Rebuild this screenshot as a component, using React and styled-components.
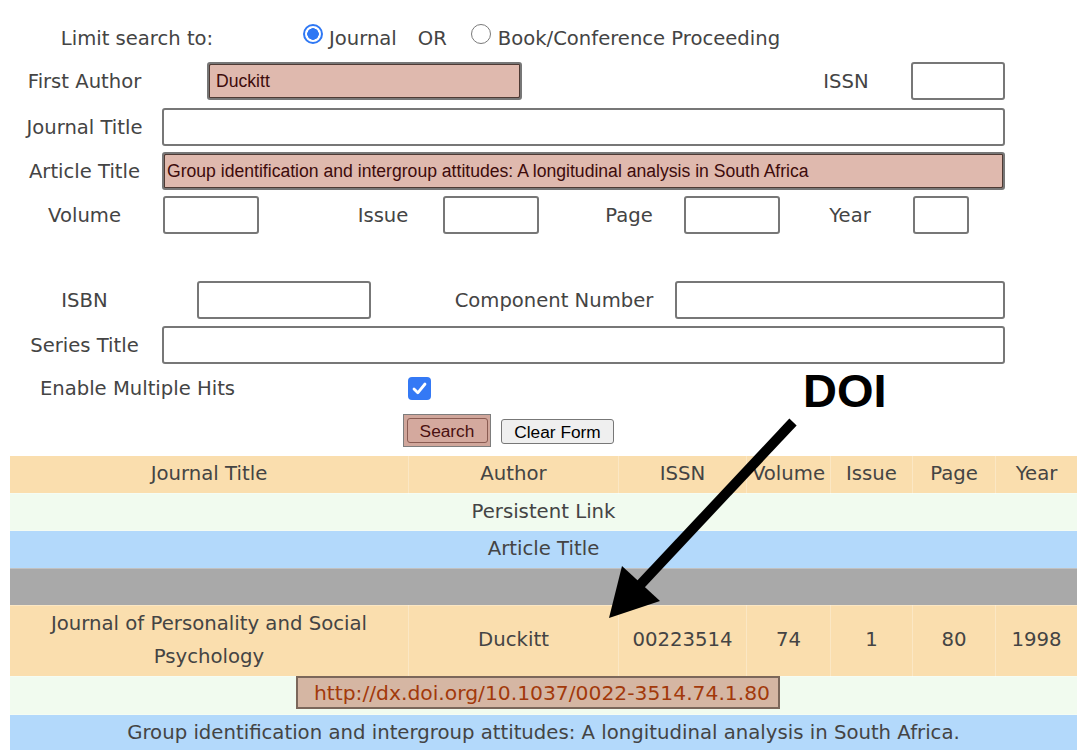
import React from "react";
import styled, { createGlobalStyle } from "styled-components";

const GlobalStyle = createGlobalStyle`
  body {
    margin: 0;
    background: #fff;
    font-family: "DejaVu Sans", Verdana, sans-serif;
    color: #444;
  }
`;

const Page = styled.div`
  position: relative;
  width: 1077px;
  height: 750px;
  overflow: hidden;
  padding-top: 18px;
  box-sizing: border-box;
`;

const Row = styled.div`
  display: flex;
  align-items: center;
  height: ${(p) => p.$h}px;
  padding-left: 9px;
`;

const Label = styled.div`
  flex-shrink: 0;
  width: ${(p) => p.$w || 151}px;
  margin-left: ${(p) => p.$ml || 0}px;
  text-align: center;
  white-space: nowrap;
  font-size: 19.6px;
  color: #444;
`;

const Field = styled.input`
  flex-shrink: 0;
  box-sizing: border-box;
  width: ${(p) => p.$w}px;
  height: 38px;
  margin: 0 0 0 ${(p) => p.$ml || 0}px;
  padding: 0 0 0 ${(p) => p.$pad || 4}px;
  border: 2px solid #777;
  border-radius: 3px;
  background: ${(p) => (p.$filled ? "#dfb9ae" : "#fff")};
  box-shadow: ${(p) => (p.$filled ? "inset 1px 1px 0 #4e3a34, inset -1px -1px 0 #4e3a34" : "none")};
  font-family: "Liberation Sans", Arial, sans-serif;
  font-size: 17.6px;
  color: #3d0b0b;
  outline: none;
`;

const Options = styled.div`
  display: flex;
  align-items: center;
  margin-left: ${(p) => p.$ml}px;
  font-size: 19.6px;
  color: #444;
`;

const Radio = styled.span`
  display: inline-block;
  box-sizing: border-box;
  width: 20px;
  height: 20px;
  margin-left: ${(p) => p.$ml || 0}px;
  margin-top: -8px;
  border-radius: 50%;
  border: ${(p) => (p.$on ? "2px solid #2f78f4" : "1.5px solid #7a7a7a")};
  background: ${(p) =>
    p.$on ? "radial-gradient(circle, #2f78f4 0 5.5px, #fff 6px)" : "#fff"};
`;

const OptionText = styled.span`
  margin-left: ${(p) => p.$ml}px;
`;

const Check = styled.span`
  display: inline-flex;
  align-items: center;
  justify-content: center;
  width: 23px;
  height: 23px;
  margin-left: ${(p) => p.$ml}px;
  border-radius: 4px;
  background: #3479f5;
`;

const SearchFrame = styled.div`
  display: flex;
  align-items: center;
  justify-content: center;
  box-sizing: border-box;
  width: 88px;
  height: 33px;
  margin-left: 394px;
  margin-top: -2px;
  background: #d0a69b;
  border: 1px solid #7d7d7d;
`;

const Button = styled.button`
  box-sizing: border-box;
  height: 25px;
  width: ${(p) => p.$w}px;
  margin-left: ${(p) => p.$ml || 0}px;
  padding: 0;
  border: 1.5px solid ${(p) => (p.$primary ? "#8a5b52" : "#777")};
  border-radius: 3px;
  background: ${(p) => (p.$primary ? "#d4a99e" : "#efefef")};
  color: ${(p) => (p.$primary ? "#4a1010" : "#000")};
  font-family: "Liberation Sans", Arial, sans-serif;
  font-size: 17.3px;
  line-height: 22px;
`;

const Results = styled.table`
  margin-left: 9px;
  width: 1068px;
  table-layout: fixed;
  border-collapse: collapse;
  font-size: 19.7px;
  color: #444;
`;

const Tr = styled.tr`
  background: ${(p) => p.$bg};
`;

const Td = styled.td`
  padding: ${(p) => (p.$top ? "0 0 4px" : "1px 0 2px")};
  line-height: 33.5px;
  height: ${(p) => (p.$empty ? "33px" : "auto")};
  text-align: center;
  vertical-align: ${(p) => (p.$top ? "top" : "middle")};
  border: 1px solid rgba(255, 255, 255, 0.28);
`;

const LinkBox = styled.a`
  display: inline-block;
  box-sizing: border-box;
  height: 33px;
  margin-left: -11px;
  margin-top: -1px;
  padding: 0 8px 0 16px;
  line-height: 30px;
  font-size: 20.3px;
  background: #d5b6a3;
  border: 2px solid #7b675a;
  color: #a2390b;
  text-decoration: none;
`;

const Doi = styled.div`
  position: absolute;
  left: 803px;
  top: 367px;
  font-family: "Liberation Sans", Arial, sans-serif;
  font-weight: bold;
  font-size: 47px;
  line-height: 47px;
  color: #000;
`;

const Arrow = styled.svg`
  position: absolute;
  left: 0;
  top: 0;
  pointer-events: none;
`;

const COLS = [399, 210, 128, 84, 82, 83, 82];
const HEAD = ["Journal Title", "Author", "ISSN", "Volume", "Issue", "Page", "Year"];

export default function App() {
  return (
    <Page>
      <GlobalStyle />
      <Row $h={40}>
        <Label $w={256}>Limit search to:</Label>
        <Options $ml={38}>
          <Radio $on />
          <OptionText $ml={6}>Journal</OptionText>
          <OptionText $ml={21}>OR</OptionText>
          <Radio $ml={24} />
          <OptionText $ml={7}>Book/Conference Proceeding</OptionText>
        </Options>
      </Row>
      <Row $h={46}>
        <Label>First Author</Label>
        <Field $w={315} $ml={47} $pad={7} $filled readOnly value="Duckitt" />
        <Label $w={128} $ml={260}>ISSN</Label>
        <Field $w={94} $ml={1} readOnly value="" />
      </Row>
      <Row $h={46}>
        <Label>Journal Title</Label>
        <Field $w={843} $ml={2} readOnly value="" />
      </Row>
      <Row $h={42}>
        <Label>Article Title</Label>
        <Field
          $w={843}
          $ml={2}
          $pad={3}
          $filled
          readOnly
          value="Group identification and intergroup attitudes: A longitudinal analysis in South Africa"
        />
      </Row>
      <Row $h={46}>
        <Label>Volume</Label>
        <Field $w={96} $ml={3} readOnly value="" />
        <Label $w={112} $ml={68}>Issue</Label>
        <Field $w={96} $ml={4} readOnly value="" />
        <Label $w={98} $ml={41}>Page</Label>
        <Field $w={96} $ml={6} readOnly value="" />
        <Label $w={120} $ml={10}>Year</Label>
        <Field $w={56} $ml={3} readOnly value="" />
      </Row>
      <Row $h={40} />
      <Row $h={44}>
        <Label>ISBN</Label>
        <Field $w={174} $ml={37} readOnly value="" />
        <Label $w={228} $ml={69}>Component Number</Label>
        <Field $w={330} $ml={7} readOnly value="" />
      </Row>
      <Row $h={46}>
        <Label>Series Title</Label>
        <Field $w={843} $ml={2} readOnly value="" />
      </Row>
      <Row $h={40}>
        <Label $w={257}>Enable Multiple Hits</Label>
        <Check $ml={142}>
          <svg width="15" height="13" viewBox="0 0 15 13">
            <path d="M2 7 L5.8 10.8 L13 2" fill="none" stroke="#fff" strokeWidth="2.8" strokeLinecap="round" strokeLinejoin="round" />
          </svg>
        </Check>
      </Row>
      <Row $h={47}>
        <SearchFrame>
          <Button $primary $w={81}>Search</Button>
        </SearchFrame>
        <Button $w={113} $ml={10}>Clear Form</Button>
      </Row>

      <Results>
        <colgroup>
          {COLS.map((w, i) => (
            <col key={i} style={{ width: w }} />
          ))}
        </colgroup>
        <tbody>
          <Tr $bg="#fadeae">
            {HEAD.map((h) => (
              <Td key={h}>{h}</Td>
            ))}
          </Tr>
          <Tr $bg="#f1fbef">
            <Td colSpan={7}>Persistent Link</Td>
          </Tr>
          <Tr $bg="#b3d9fb">
            <Td colSpan={7}>Article Title</Td>
          </Tr>
          <Tr $bg="#a9a9a9">
            <Td colSpan={7} $empty />
          </Tr>
          <Tr $bg="#fadeae">
            <Td>Journal of Personality and Social Psychology</Td>
            <Td>Duckitt</Td>
            <Td>00223514</Td>
            <Td>74</Td>
            <Td>1</Td>
            <Td>80</Td>
            <Td>1998</Td>
          </Tr>
          <Tr $bg="#f1fbef">
            <Td colSpan={7} $top>
              <LinkBox href="#">http://dx.doi.org/10.1037/0022-3514.74.1.80</LinkBox>
            </Td>
          </Tr>
          <Tr $bg="#b3d9fb">
            <Td colSpan={7}>
              Group identification and intergroup attitudes: A longitudinal analysis in South Africa.
            </Td>
          </Tr>
        </tbody>
      </Results>

      <Doi>DOI</Doi>
      <Arrow width="1077" height="750" viewBox="0 0 1077 750">
        <line x1="793" y1="422" x2="640" y2="585" stroke="#000" strokeWidth="10" />
        <polygon points="609,618 622,566 660,601" fill="#000" />
      </Arrow>
    </Page>
  );
}
